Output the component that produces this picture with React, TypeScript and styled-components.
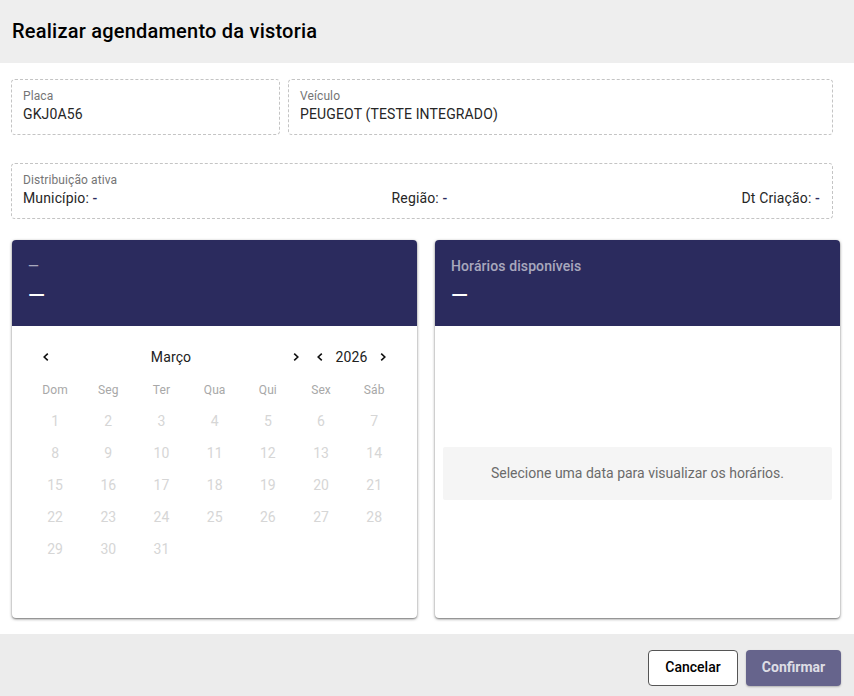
import { createGlobalStyle } from "styled-components";
import styled from "styled-components";

const GlobalStyle = createGlobalStyle`
  html, body {
    margin: 0;
    padding: 0;
    background: #fff;
    font-family: Roboto, "Liberation Sans", sans-serif;
  }
`;

const weekDays = ["Dom", "Seg", "Ter", "Qua", "Qui", "Sex", "Sáb"];
const days = Array.from({ length: 31 }, (_, i) => i + 1);

const Chevron = ({ left }: { left?: boolean }) => (
  <svg width="10" height="10" viewBox="0 0 10 10" fill="none">
    <path
      d={left ? "M6.8 1.6 3.2 5l3.6 3.4" : "M3.2 1.6 6.8 5 3.2 8.4"}
      stroke="#111"
      strokeWidth="1.6"
    />
  </svg>
);

const App = () => {
  return (
    <Page>
      <GlobalStyle />
      <Header>
        <Title>Realizar agendamento da vistoria</Title>
      </Header>
      <Content>
        <FieldRow>
          <Field $width="269px">
            <FieldLabel>Placa</FieldLabel>
            <FieldValue>GKJ0A56</FieldValue>
          </Field>
          <Field $width="545px">
            <FieldLabel>Veículo</FieldLabel>
            <FieldValue>PEUGEOT (TESTE INTEGRADO)</FieldValue>
          </Field>
        </FieldRow>
        <Field $width="822px">
          <FieldLabel>Distribuição ativa</FieldLabel>
          <DistributionRow>
            <FieldValue>
              Município: <Empty>-</Empty>
            </FieldValue>
            <FieldValue>
              Região: <Empty>-</Empty>
            </FieldValue>
            <FieldValue>
              Dt Criação: <Empty>-</Empty>
            </FieldValue>
          </DistributionRow>
        </Field>
        <Panels>
          <Panel>
            <PanelHeader>
              <PanelCaption>—</PanelCaption>
              <PanelDash>—</PanelDash>
            </PanelHeader>
            <CalendarBody>
              <CalendarNav>
                <NavGroup $width="260px">
                  <NavButton>
                    <Chevron left />
                  </NavButton>
                  <NavLabel>Março</NavLabel>
                  <NavButton>
                    <Chevron />
                  </NavButton>
                </NavGroup>
                <NavGroup $width="73px">
                  <NavButton>
                    <Chevron left />
                  </NavButton>
                  <NavLabel>2026</NavLabel>
                  <NavButton>
                    <Chevron />
                  </NavButton>
                </NavGroup>
              </CalendarNav>
              <DayGrid>
                {weekDays.map((d) => (
                  <WeekDay key={d}>{d}</WeekDay>
                ))}
                {days.map((d) => (
                  <Day key={d}>{d}</Day>
                ))}
              </DayGrid>
            </CalendarBody>
          </Panel>
          <Panel>
            <PanelHeader>
              <PanelCaption>Horários disponíveis</PanelCaption>
              <PanelDash>—</PanelDash>
            </PanelHeader>
            <TimesBody>
              <EmptyMessage>Selecione uma data para visualizar os horários.</EmptyMessage>
            </TimesBody>
          </Panel>
        </Panels>
      </Content>
      <Footer>
        <CancelButton>Cancelar</CancelButton>
        <ConfirmButton>Confirmar</ConfirmButton>
      </Footer>
    </Page>
  );
};

export default App;

const Page = styled.div`
  width: 854px;
  height: 696px;
  display: flex;
  flex-direction: column;
  overflow: hidden;
`;

const Header = styled.div`
  height: 63px;
  flex-shrink: 0;
  background: #eeeeee;
  display: flex;
  align-items: center;
  padding-left: 12px;
`;

const Title = styled.h2`
  margin: 0 0 1px;
  font-size: 20px;
  font-weight: 500;
  letter-spacing: 0.22px;
  color: #000;
`;

const Content = styled.div`
  flex: 1;
  padding: 16px 14px 0 11px;
  display: flex;
  flex-direction: column;
  gap: 28px;
`;

const FieldRow = styled.div`
  display: flex;
  gap: 8px;
`;

const Field = styled.div<{ $width: string }>`
  width: ${(p) => p.$width};
  height: 56px;
  box-sizing: border-box;
  border: 1px dashed #c4c4c4;
  border-radius: 4px;
  padding: 9px 12px 0 11px;
  display: flex;
  flex-direction: column;
`;

const FieldLabel = styled.span`
  font-size: 12px;
  line-height: 14px;
  letter-spacing: 0.1px;
  color: #757575;
`;

const FieldValue = styled.span`
  margin-top: 1px;
  font-size: 14px;
  line-height: 20px;
  letter-spacing: 0.14px;
  color: #262626;
`;

const Empty = styled.span`
  font-weight: 500;
  color: #2b2b5e;
`;

const DistributionRow = styled.div`
  display: flex;
  justify-content: space-between;
`;

const Panels = styled.div`
  display: flex;
  gap: 18px;
  margin-top: -7px;
  margin-left: 1px;
`;

const Panel = styled.div`
  width: 405px;
  height: 378px;
  background: #fff;
  border-radius: 4px;
  overflow: hidden;
  box-shadow: 0 1px 3px rgba(0, 0, 0, 0.5), 0 1px 1px rgba(0, 0, 0, 0.14);
  display: flex;
  flex-direction: column;
`;

const PanelHeader = styled.div`
  height: 86px;
  flex-shrink: 0;
  box-sizing: border-box;
  background: #2b2b5e;
  padding: 18px 16px 0;
  display: flex;
  flex-direction: column;
`;

const PanelCaption = styled.span`
  font-size: 14px;
  font-weight: 500;
  line-height: 17px;
  letter-spacing: 0.1px;
  color: rgba(255, 255, 255, 0.6);
`;

const PanelDash = styled.span`
  margin-top: 8px;
  font-size: 22px;
  font-weight: 500;
  line-height: 26px;
  color: #fff;
`;

const CalendarBody = styled.div`
  padding: 20px 16px 0;
`;

const CalendarNav = styled.div`
  display: flex;
  align-items: center;
  gap: 14px;
  height: 22px;
  padding-left: 13px;
`;

const NavGroup = styled.div<{ $width: string }>`
  width: ${(p) => p.$width};
  display: flex;
  align-items: center;
`;

const NavButton = styled.span`
  width: 10px;
  height: 10px;
  flex-shrink: 0;
  display: flex;
`;

const NavLabel = styled.span`
  flex: 1;
  text-align: center;
  font-size: 14px;
  letter-spacing: 0.14px;
  color: #212121;
`;

const DayGrid = styled.div`
  display: grid;
  grid-template-columns: repeat(7, 53.2px);
  grid-auto-rows: 32px;
  margin-top: 5px;
  margin-left: 0.5px;
`;

const WeekDay = styled.span`
  font-size: 12px;
  line-height: 34px;
  letter-spacing: 0.1px;
  text-align: center;
  color: #a8a8a8;
`;

const Day = styled.span`
  font-size: 14px;
  line-height: 32px;
  text-align: center;
  color: #d6d6d6;
`;

const TimesBody = styled.div`
  flex: 1;
  display: flex;
  align-items: center;
  padding: 2px 8px 0;
`;

const EmptyMessage = styled.div`
  width: 100%;
  height: 53px;
  background: #f5f5f5;
  border-radius: 2px;
  display: flex;
  align-items: center;
  justify-content: center;
  font-size: 14px;
  color: #6b6b6b;
`;

const Footer = styled.div`
  height: 62px;
  flex-shrink: 0;
  box-sizing: border-box;
  background: #ececec;
  display: flex;
  align-items: flex-start;
  justify-content: flex-end;
  gap: 8px;
  padding: 16px 13px 0 0;
`;

const CancelButton = styled.button`
  width: 90px;
  height: 36px;
  box-sizing: border-box;
  background: #fff;
  border: 1px solid #555;
  border-radius: 4px;
  font-family: inherit;
  font-size: 14px;
  font-weight: 500;
  padding: 0 0 2px;
  color: #000;
`;

const ConfirmButton = styled.button`
  width: 95px;
  height: 36px;
  box-sizing: border-box;
  background: #66648c;
  border: none;
  border-radius: 4px;
  box-shadow: 0 1px 2px rgba(0, 0, 0, 0.25);
  font-family: inherit;
  font-size: 14px;
  font-weight: 700;
  padding: 0 0 2px;
  color: rgba(255, 255, 255, 0.8);
`;
